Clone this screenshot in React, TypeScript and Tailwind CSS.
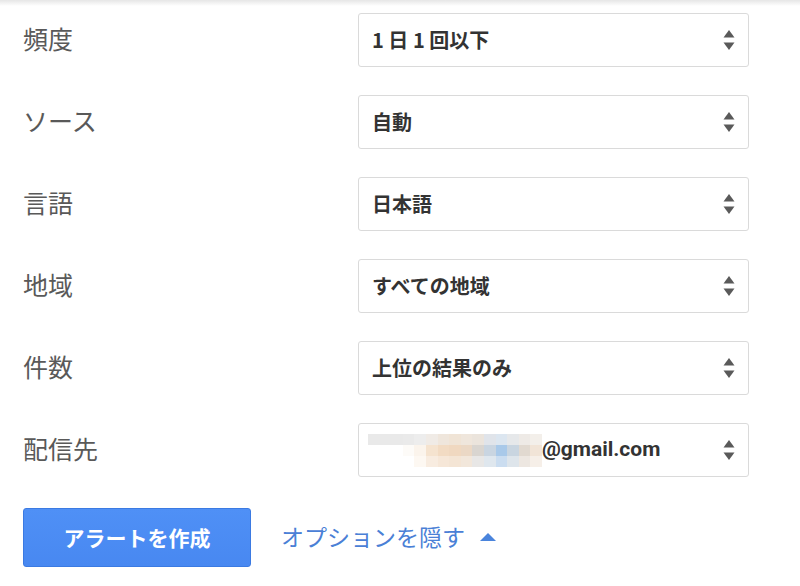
import React from "react";

const font = { fontFamily: '"Noto Sans CJK JP", "Noto Sans", sans-serif' };

const rows = [
  { label: "頻度", value: "1 日 1 回以下" },
  { label: "ソース", value: "自動" },
  { label: "言語", value: "日本語" },
  { label: "地域", value: "すべての地域" },
  { label: "件数", value: "上位の結果のみ" },
];

// blurred address mosaic, 3 rows x 15 columns
const mosaic = [
  ["#e9e9e9", "#e9e9e9", "#e9e9e9", "#eaeaea", "#ededed", "#f0ebe6", "#efe6dc", "#f0e4d6", "#efe6dc", "#ebe4dc", "#e0e4ea", "#dce6f0", "#e6e8ea", "#eeeae6", "#f3efea"],
  ["#ffffff", "#ffffff", "#ffffff", "#fdfbf8", "#fbf4ec", "#f5e3cf", "#f2dbc3", "#f0d8c0", "#ebd8c5", "#d9d5d0", "#c9d5e1", "#a9c9e9", "#c9d5e0", "#e1d9d0", "#f1e4d7"],
  ["#ffffff", "#ffffff", "#ffffff", "#ffffff", "#fdf8f2", "#f8ece0", "#f6e7d8", "#f4e5d5", "#f2e7db", "#e8e7e6", "#dfe7ee", "#cbddf0", "#dee5eb", "#ede7e1", "#f6efe8"],
];

function Arrows() {
  return (
    <svg width="12" height="22" viewBox="0 0 12 22" className="shrink-0">
      <path d="M6 1 L11.5 8.5 H0.5 Z" fill="#5a5a5a" />
      <path d="M6 21 L11.5 13.5 H0.5 Z" fill="#5a5a5a" />
    </svg>
  );
}

function SelectBox({ children }: { children: React.ReactNode }) {
  return (
    <div className="w-[391px] h-[54px] border border-[#dadada] rounded-[3px] bg-white flex items-center justify-between pl-[13px] pr-[13px]">
      <div className="flex items-center text-[20px] font-bold text-[#333]">{children}</div>
      <Arrows />
    </div>
  );
}

export default function App() {
  return (
    <div className="w-[800px] h-[586px] bg-white overflow-hidden" style={font}>
      <div className="h-[6px] bg-gradient-to-b from-[#e6e6e6] to-white" />
      <div className="pl-[23px] pt-[7px]">
        {rows.map((r) => (
          <div key={r.label} className="flex items-center h-[54px] mb-[28px]">
            <div className="w-[335px] text-[25px] text-[#595959] pb-[3px]">{r.label}</div>
            <SelectBox>{r.value}</SelectBox>
          </div>
        ))}
        <div className="flex items-center h-[54px]">
          <div className="w-[335px] text-[25px] text-[#595959] pb-[3px]">配信先</div>
          <SelectBox>
            <div className="flex flex-col -ml-[4px]">
              {mosaic.map((line, i) => (
                <div key={i} className="flex">
                  {line.map((c, j) => (
                    <div key={j} className="w-[11.6px] h-[11px]" style={{ backgroundColor: c }} />
                  ))}
                </div>
              ))}
            </div>
            <span className="text-[21px] text-[#333]" style={{ fontFamily: 'Roboto, "Noto Sans", sans-serif' }}>
              @gmail.com
            </span>
          </SelectBox>
        </div>
        <div className="flex items-center mt-[31px]">
          <button className="w-[228px] h-[59px] rounded-[3px] border border-[#3b7ae2] bg-gradient-to-b from-[#4f90f6] to-[#4888f1] text-white text-[21px] font-bold">
            アラートを作成
          </button>
          <div className="ml-[30px] flex items-center text-[23px] text-[#4a80d6] pb-[3px]">
            オプションを隠す
            <svg width="16" height="8" viewBox="0 0 16 8" className="ml-[15px] mt-[2px]">
              <path d="M8 0 L16 8 H0 Z" fill="#4a84dc" />
            </svg>
          </div>
        </div>
      </div>
    </div>
  );
}
